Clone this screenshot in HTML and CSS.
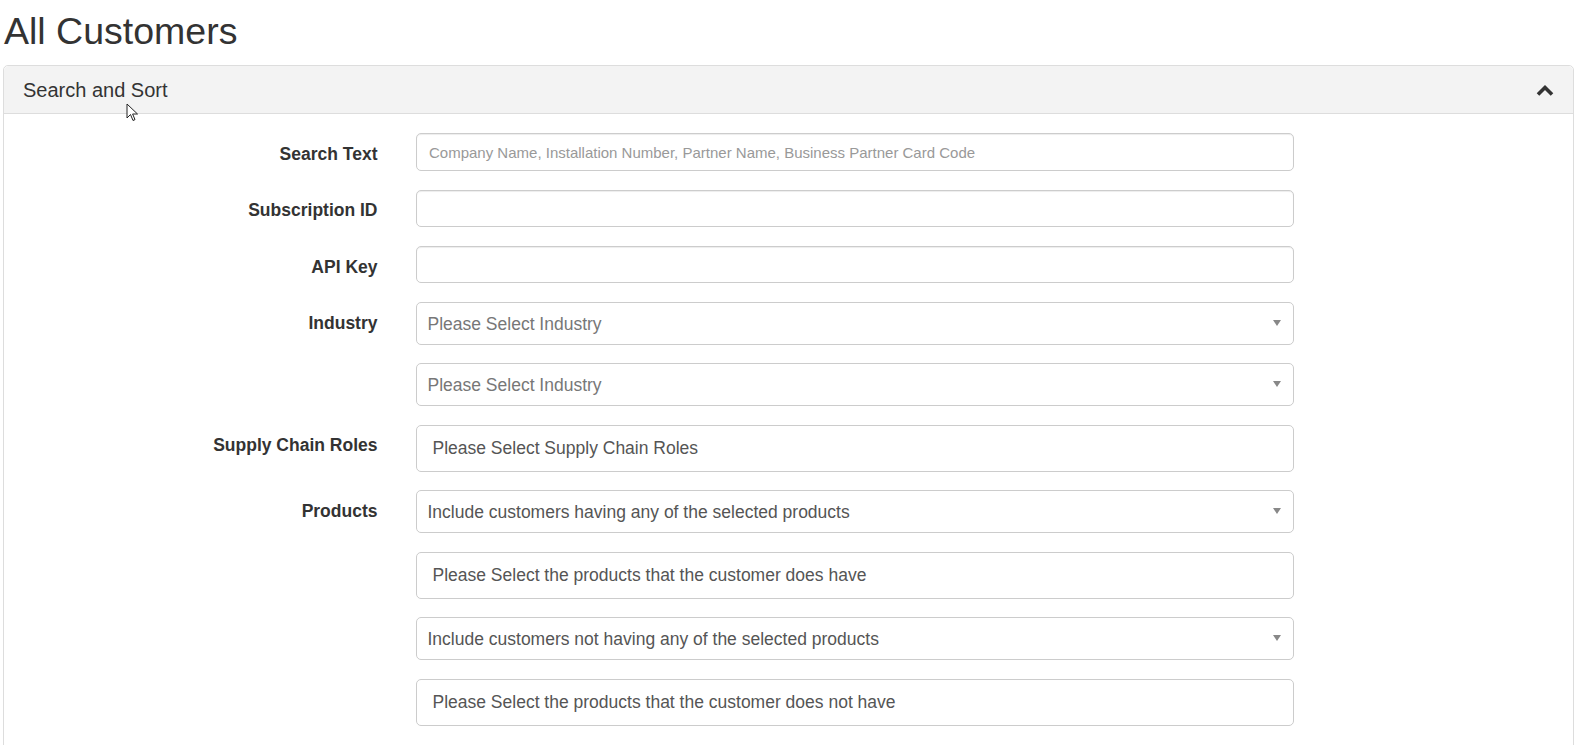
FILE: index.html
```
<!DOCTYPE html>
<html lang="en">
<head>
    <meta charset="UTF-8">
    <title>All Customers</title>
    <link rel="stylesheet" href="styles.css">
</head>
<body>
    <div class="page">
        <h2 class="page-title">All Customers</h2>

        <div class="panel">
            <div class="panel-heading">
                <span>Search and Sort</span>
                <svg class="chevron" width="18" height="12" viewBox="0 0 18 12">
                    <polyline points="2,10.5 9,3.5 16,10.5" fill="none" stroke="#333" stroke-width="3.6"/>
                </svg>
            </div>

            <div class="panel-body">
                <div class="form-group">
                    <label>Search Text</label>
                    <input class="form-control input-sm" type="text" placeholder="Company Name, Installation Number, Partner Name, Business Partner Card Code">
                </div>

                <div class="form-group">
                    <label>Subscription ID</label>
                    <input class="form-control input-sm" type="text">
                </div>

                <div class="form-group">
                    <label>API Key</label>
                    <input class="form-control input-sm" type="text">
                </div>

                <div class="form-group">
                    <label>Industry</label>
                    <div class="select-box placeholder">Please Select Industry<span class="caret"></span></div>
                </div>

                <div class="form-group">
                    <label></label>
                    <div class="select-box placeholder">Please Select Industry<span class="caret"></span></div>
                </div>

                <div class="form-group">
                    <label>Supply Chain Roles</label>
                    <div class="multi-box">Please Select Supply Chain Roles</div>
                </div>

                <div class="form-group">
                    <label>Products</label>
                    <div class="select-box">Include customers having any of the selected products<span class="caret"></span></div>
                </div>

                <div class="form-group">
                    <label></label>
                    <div class="multi-box">Please Select the products that the customer does have</div>
                </div>

                <div class="form-group">
                    <label></label>
                    <div class="select-box">Include customers not having any of the selected products<span class="caret"></span></div>
                </div>

                <div class="form-group">
                    <label></label>
                    <div class="multi-box">Please Select the products that the customer does not have</div>
                </div>
            </div>
        </div>
    </div>

    <!-- mouse pointer seen in the screenshot -->
    <svg class="pointer" width="13" height="20" viewBox="0 0 13 20">
        <path d="M1,1 L1,15 L4.5,11.5 L7,17.5 L9,16.6 L6.6,11 L11.5,11 Z" fill="#fff" stroke="#222" stroke-width="1"/>
    </svg>
</body>
</html>
```

FILE: styles.css
```
:root {
    --text-color: #333;
    --border-color: #ccc;
}

* {
    box-sizing: border-box;
}

body {
    font-family: "Liberation Sans", Arial, sans-serif;
    font-size: 17.5px;
    line-height: 1.42857;
    color: var(--text-color);
    background: #fff;
    margin: 0;
    overflow: hidden;
}

.page {
    padding: 0 1px 0 3px;
}

.page-title {
    font-size: 37.5px;
    font-weight: normal;
    line-height: 1.1;
    margin: 11px 0 13px 1px;
}

.panel {
    border: 1px solid #ddd;
    border-radius: 5px;
    min-height: 700px;
}

.panel-heading {
    display: flex;
    align-items: center;
    justify-content: space-between;
    background: #f3f3f3;
    border-bottom: 1px solid #ddd;
    border-radius: 5px 5px 0 0;
    padding: 12.5px 19px;
    font-size: 20px;
    line-height: 22px;
}

.chevron {
    display: block;
}

.panel-body {
    padding: 19px 0;
}

.form-group {
    display: flex;
    align-items: flex-start;
    margin-bottom: 18.75px;
}

label {
    width: 373.5px;
    flex-shrink: 0;
    text-align: right;
    font-weight: bold;
    padding-top: 8.75px;
    margin-right: 38px;
    min-height: 1px;
}

.form-control {
    width: 878px;
    border: 1px solid var(--border-color);
    border-radius: 5px;
    box-shadow: inset 0 1px 1px rgba(0,0,0,0.075);
    font-family: inherit;
    color: #555;
}

.input-sm {
    height: 37.5px;
    padding: 6px 12.5px;
    font-size: 15px;
}

.input-sm::placeholder {
    color: #999;
}

.select-box {
    position: relative;
    width: 878px;
    height: 42.5px;
    border: 1px solid var(--border-color);
    border-radius: 5px;
    padding: 0 40px 0 11px;
    line-height: 42px;
    color: #555;
    white-space: nowrap;
}

.select-box.placeholder {
    color: #777;
}

.caret {
    position: absolute;
    right: 12px;
    top: 17px;
    width: 0;
    height: 0;
    border-left: 4.5px solid transparent;
    border-right: 4.5px solid transparent;
    border-top: 6px solid #888;
}

.multi-box {
    width: 878px;
    height: 47px;
    border: 1px solid var(--border-color);
    border-radius: 5px;
    padding: 0 16px;
    line-height: 44px;
    color: #555;
    white-space: nowrap;
}

.pointer {
    position: absolute;
    left: 126px;
    top: 103px;
}
```
